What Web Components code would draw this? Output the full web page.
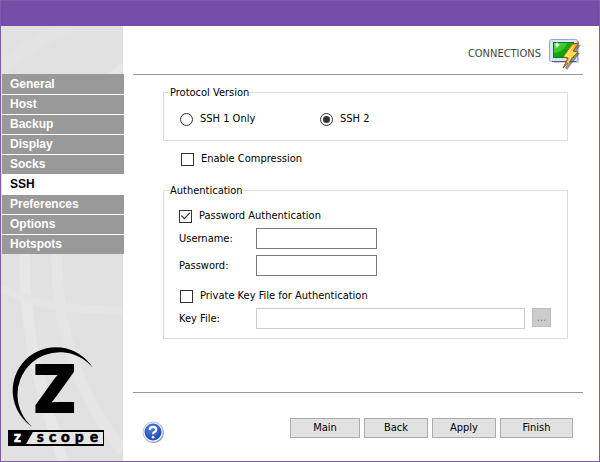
<!DOCTYPE html>
<html lang="en">
<head>
<meta charset="utf-8">
<title>Connections</title>
<style>
	body {
		margin: 0;
		background: #fff;
		color: #000;
		font: 11px/14px "DejaVu Sans Condensed", "Noto Sans", sans-serif;
	}
</style>
</head>
<body>

<app-window>
	<side-nav slot="side">
		<nav-item>General</nav-item>
		<nav-item>Host</nav-item>
		<nav-item>Backup</nav-item>
		<nav-item>Display</nav-item>
		<nav-item>Socks</nav-item>
		<nav-item current>SSH</nav-item>
		<nav-item>Preferences</nav-item>
		<nav-item>Options</nav-item>
		<nav-item>Hotspots</nav-item>
	</side-nav>
	<brand-logo slot="side"></brand-logo>

	<page-header>CONNECTIONS</page-header>
	<ssh-settings></ssh-settings>
	<page-footer>
		<push-button>Main</push-button>
		<push-button>Back</push-button>
		<push-button>Apply</push-button>
		<push-button wide>Finish</push-button>
	</page-footer>
</app-window>

<script>
// Attaches an open shadow root and fills it
class BaseElement extends HTMLElement {
	constructor() {
		super();
		this.root = this.attachShadow({ mode: 'open' });
		this.root.innerHTML = this.render();
	}

	render() {
		return '<slot></slot>';
	}
}

class AppWindow extends BaseElement {
	render() {
		return `
		<style>
		:host {
			display: flex;
			flex-direction: column;
			box-sizing: border-box;
			min-height: 100vh;
			border: 1px solid #7f5bab;
		}
		.title {
			height: 25px;
			background: #744da9;
		}
		.body {
			flex: 1;
			display: grid;
			grid-template-columns: 122px 1fr;
		}
		aside {
			position: relative;
			display: flex;
			flex-direction: column;
			justify-content: space-between;
			padding: 48px 0 14px;
			background: #e1e1e1;
		}
		.streaks {
			position: absolute;
			inset: 0;
			width: 100%;
			height: 100%;
		}
		main {
			display: flex;
			flex-direction: column;
			padding: 0 16px 0 10px;
		}
		</style>
		<div class="title"></div>
		<div class="body">
			<aside>
				<svg class="streaks" viewBox="0 0 122 435" preserveAspectRatio="none" fill="none" stroke="#e7e7e7" aria-hidden="true">
					<path d="M0 42Q40 10 70 0" stroke-width="14" stroke="#e3e3e3"/>
					<path d="M24 220C22 300 35 350 62 435" stroke-width="11"/>
					<path d="M56 220C54 290 70 360 122 425" stroke-width="11" stroke="#e5e5e5"/>
					<path d="M0 262C40 282 80 284 122 284" stroke-width="8" stroke="#e4e4e4"/>
					<path d="M108 52L122 40" stroke-width="7"/>
				</svg>
				<slot name="side"></slot>
			</aside>
			<main><slot></slot></main>
		</div>
		`;
	}
}

class SideNav extends BaseElement {
	render() {
		return `
		<style>
		:host {
			display: block;
			position: relative;
			margin: 0 -1px 0 1px;
		}
		</style>
		<nav><slot></slot></nav>
		`;
	}
}

class NavItem extends BaseElement {
	render() {
		return `
		<style>
		:host {
			display: block;
			border-top: 1px solid #fff;
			background: #999;
			color: #fff;
			font: bold 12px/19px "Liberation Sans", Arial, sans-serif;
		}
		:host(:first-child) {
			border-color: #999;
		}
		:host([current]) {
			background: #fff;
			color: #000;
		}
		a {
			display: block;
			padding-left: 8px;
			color: inherit;
			text-decoration: none;
		}
		</style>
		<a href="#"><slot></slot></a>
		`;
	}
}

class BrandLogo extends BaseElement {
	render() {
		return `
		<style>
		:host {
			display: block;
			position: relative;
			padding-left: 6px;
		}
		svg {
			display: block;
		}
		</style>
		<svg width="98" height="102" viewBox="7 345 98 102" role="img" aria-label="z/scope">
			<path d="M92.6 367.5A43.3 43.3 0 1 0 32.5 427A42.45 42.45 0 1 1 92.6 367.5Z"/>
			<text x="33" y="412" font-family="Inter" font-weight="800" font-size="64" stroke="#000" stroke-width="2">Z</text>
			<rect x="8.5" y="430.5" width="95" height="15" fill="#e6e6e6" stroke="#000"/>
			<path d="M8 430H34L25 446H8ZM26 430H104V432H26ZM26 444H104V446H26Z"/>
			<g font-family="Lato" font-weight="900" font-size="15">
				<text x="14" y="442" fill="#fff" stroke="#fff" stroke-width=".6">z</text>
				<text x="37 49 61 75 90" y="442" stroke="#000" stroke-width=".6">scope</text>
			</g>
		</svg>
		`;
	}
}

class PageHeader extends BaseElement {
	render() {
		return `
		<style>
		:host {
			display: flex;
			align-items: center;
			justify-content: flex-end;
			gap: 8px;
			height: 40px;
			padding: 8px 0 0;
			border-bottom: 1px solid #999;
		}
		h1 {
			margin: 0;
			color: #444;
			font: inherit;
		}
		</style>
		<h1><slot></slot></h1>
		<svg width="34" height="34" viewBox="0 0 34 34" aria-hidden="true">
			<defs>
				<linearGradient id="screen" x1="0" y1="0" x2="1" y2="1">
					<stop offset="0" stop-color="#4fd83c"/>
					<stop offset=".35" stop-color="#12b50d"/>
					<stop offset="1" stop-color="#028a02"/>
				</linearGradient>
				<linearGradient id="bolt" x1="0" y1="0" x2="0" y2="1">
					<stop offset="0" stop-color="#f0a010"/>
					<stop offset=".45" stop-color="#ffe05a"/>
					<stop offset=".6" stop-color="#ffc326"/>
					<stop offset="1" stop-color="#e89010"/>
				</linearGradient>
			</defs>
			<path d="M4 4H30V26H5Z" fill="#777" opacity=".35"/>
			<rect x="0.5" y="2.5" width="28" height="22" rx="2" fill="#dbe5f9" stroke="#91a9df"/>
			<path d="M3 24.5H27" stroke="#4d5f9b"/>
			<rect x="4.5" y="5.5" width="20" height="15" fill="url(#screen)" stroke="#077b0b"/>
			<path d="M5 6H18Q16 14 5 16Z" fill="#9cf389" opacity=".3"/>
			<path d="M8 5L9 7L11 8L9 9L8 11L7 9L6 8L7 7Z" fill="#fff"/>
			<path d="M26 7L32 8L26 16H31L18 33L16 31L21 22H17Z" fill="#444" opacity=".55"/>
			<path d="M23 7L30 6L24 14L29 15L14 31L19 21L14 20Z" fill="url(#bolt)" stroke="#98560a" stroke-linejoin="round"/>
			<path d="M25 8L17 19L22 20L19 26" fill="none" stroke="#fff0a0"/>
		</svg>
		`;
	}
}

class GroupBox extends BaseElement {
	render() {
		return `
		<style>
		:host {
			display: block;
		}
		fieldset {
			margin: 0;
			padding: 0 8px 9px 11px;
			border: 1px solid #dcdcdc;
		}
		legend {
			margin-left: -5px;
			padding: 2px 0 0;
		}
		</style>
		<fieldset>
			<legend>${this.getAttribute('label')}</legend>
			<slot></slot>
		</fieldset>
		`;
	}
}

class ChoiceField extends BaseElement {
	render() {
		const type = this.getAttribute('type');
		const checked = this.hasAttribute('checked') ? 'checked' : '';
		return `
		<style>
		:host {
			display: block;
		}
		label {
			display: flex;
			align-items: center;
			gap: 7px;
		}
		input {
			appearance: none;
			display: grid;
			place-items: center;
			box-sizing: border-box;
			width: 13px;
			height: 13px;
			margin: 0;
			border: 1px solid #333;
			background: #fff;
		}
		input[type=radio] {
			border-radius: 50%;
		}
		input[type=radio]:checked::before {
			content: "";
			width: 7px;
			height: 7px;
			border-radius: 50%;
			background: #333;
		}
		input[type=checkbox]:checked::before {
			content: "";
			width: 11px;
			height: 11px;
			background: #333;
			clip-path: polygon(8% 50%, 15% 42%, 40% 66%, 85% 18%, 93% 26%, 40% 82%);
		}
		</style>
		<label><input type="${type}" ${checked}><slot></slot></label>
		`;
	}

	connectedCallback() {
		const input = this.root.querySelector('input');
		if (input.type !== 'radio') {
			return;
		}
		// Radios sit in separate roots, so clear the siblings by hand
		input.addEventListener('change', () => {
			this.parentElement.querySelectorAll('choice-field').forEach((field) => {
				if (field !== this) {
					field.root.querySelector('input').checked = false;
				}
			});
		});
	}
}

class TextField extends BaseElement {
	render() {
		const type = this.getAttribute('type') || 'text';
		const disabled = this.hasAttribute('disabled') ? 'disabled' : '';
		return `
		<style>
		:host {
			display: grid;
			grid-template-columns: 77px 1fr;
		}
		label {
			padding-top: 4px;
		}
		input {
			box-sizing: border-box;
			width: 121px;
			height: 21px;
			margin: 0;
			padding: 0 4px;
			border: 1px solid #7a7a7a;
			border-radius: 0;
			background: #fff;
			font: inherit;
		}
		input:disabled {
			width: 100%;
			border-color: #ccc;
		}
		</style>
		<label for="field"><slot></slot></label>
		<input id="field" type="${type}" ${disabled}>
		`;
	}
}

class PushButton extends BaseElement {
	render() {
		const disabled = this.hasAttribute('disabled') ? 'disabled' : '';
		return `
		<style>
		:host {
			display: block;
			width: 64px;
		}
		:host(:first-child) {
			width: 70px;
		}
		:host([wide]) {
			width: 73px;
		}
		:host([small]) {
			width: 19px;
		}
		button {
			display: block;
			box-sizing: border-box;
			width: 100%;
			height: 20px;
			padding: 0;
			border: 1px solid #adadad;
			border-radius: 0;
			background: #e1e1e1;
			color: #000;
			font: inherit;
		}
		button:disabled {
			height: 19px;
			border-color: #bfbfbf;
			background: #ccc;
			color: #777;
		}
		</style>
		<button type="button" ${disabled}><slot></slot></button>
		`;
	}
}

class SshSettings extends BaseElement {
	render() {
		return `
		<style>
		:host {
			display: flex;
			flex-direction: column;
			padding: 9px 15px 0 30px;
		}
		.radios {
			display: grid;
			grid-template-columns: 140px 1fr;
			padding: 12px 0 5px 5px;
		}
		.compression {
			padding: 11px 0 16px 18px;
		}
		.auth {
			display: grid;
			gap: 5px;
			padding: 11px 0 0 4px;
		}
		.login {
			display: grid;
			gap: 6px;
		}
		.private {
			padding: 8px 0 0 1px;
		}
		.key {
			display: grid;
			grid-template-columns: 1fr 19px;
			gap: 7px;
			padding-right: 8px;
		}
		</style>
		<group-box label="Protocol Version">
			<div class="radios">
				<choice-field type="radio">SSH 1 Only</choice-field>
				<choice-field type="radio" checked>SSH 2</choice-field>
			</div>
		</group-box>
		<choice-field class="compression" type="checkbox">Enable Compression</choice-field>
		<group-box label="Authentication">
			<div class="auth">
				<choice-field type="checkbox" checked>Password Authentication</choice-field>
				<div class="login">
					<text-field>Username:</text-field>
					<text-field type="password">Password:</text-field>
				</div>
				<choice-field class="private" type="checkbox">Private Key File for Authentication</choice-field>
				<div class="key">
					<text-field disabled>Key File:</text-field>
					<push-button small disabled>...</push-button>
				</div>
			</div>
		</group-box>
		`;
	}
}

class PageFooter extends BaseElement {
	render() {
		return `
		<style>
		:host {
			display: flex;
			align-items: center;
			justify-content: space-between;
			height: 68px;
			margin-top: auto;
			padding: 0 10px 0 8px;
			border-top: 1px solid #999;
		}
		.help {
			padding: 10px 0 0;
			border: 0;
			background: none;
		}
		svg {
			display: block;
		}
		.actions {
			display: flex;
			gap: 4px;
			padding-top: 2px;
		}
		</style>
		<button class="help" type="button" aria-label="Help">
			<svg width="24" height="24" viewBox="0 0 24 24">
				<defs>
					<radialGradient id="ball" cx=".4" cy=".3" r=".8">
						<stop offset="0" stop-color="#4f83ea"/>
						<stop offset="1" stop-color="#1243b0"/>
					</radialGradient>
				</defs>
				<circle cx="12.5" cy="12.5" r="10.5" fill="#888"/>
				<circle cx="12" cy="12" r="10" fill="#f2f4fa" stroke="#c5cad8"/>
				<circle cx="12" cy="12" r="8.5" fill="url(#ball)"/>
				<path d="M8.8 10Q8.8 6.8 12 6.8T15.2 9.4Q15.2 11 13.5 12Q12.1 12.8 12.1 14.2" fill="none" stroke="#fff" stroke-width="2.2"/>
				<circle cx="12.1" cy="17.2" r="1.4" fill="#fff"/>
			</svg>
		</button>
		<div class="actions"><slot></slot></div>
		`;
	}
}

window.customElements.define('app-window', AppWindow);
window.customElements.define('side-nav', SideNav);
window.customElements.define('nav-item', NavItem);
window.customElements.define('brand-logo', BrandLogo);
window.customElements.define('page-header', PageHeader);
window.customElements.define('group-box', GroupBox);
window.customElements.define('choice-field', ChoiceField);
window.customElements.define('text-field', TextField);
window.customElements.define('push-button', PushButton);
window.customElements.define('ssh-settings', SshSettings);
window.customElements.define('page-footer', PageFooter);
</script>
</body>
</html>
